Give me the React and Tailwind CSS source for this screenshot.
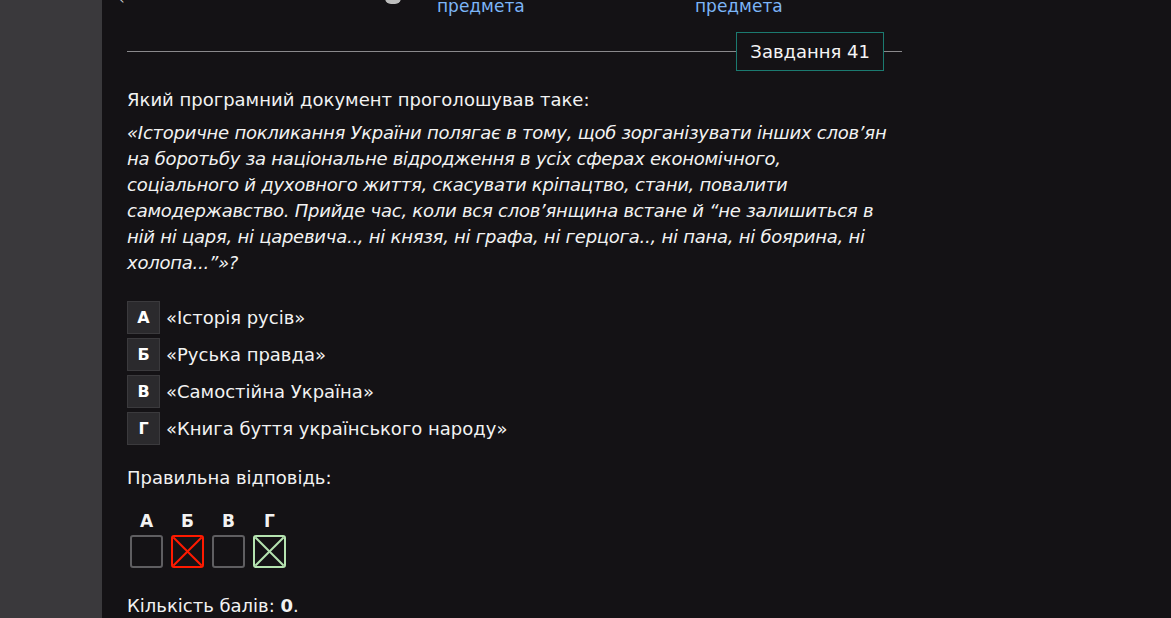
import React from 'react';

const options = [
  { key: 'А', text: '«Історія русів»' },
  { key: 'Б', text: '«Руська правда»' },
  { key: 'В', text: '«Самостійна Україна»' },
  { key: 'Г', text: '«Книга буття українського народу»' },
];

// state of each answer cell: empty / wrong pick / correct
const answers = [
  { key: 'А', state: 'none' },
  { key: 'Б', state: 'wrong' },
  { key: 'В', state: 'none' },
  { key: 'Г', state: 'right' },
];

// quote broken the way the original page wraps it
const quoteLines = [
  '«Історичне покликання України полягає в тому, щоб зорганізувати інших слов’ян',
  'на боротьбу за національне відродження в усіх сферах економічного,',
  'соціального й духовного життя, скасувати кріпацтво, стани, повалити',
  'самодержавство. Прийде час, коли вся слов’янщина встане й “не залишиться в',
  'ній ні царя, ні царевича.., ні князя, ні графа, ні герцога.., ні пана, ні боярина, ні',
  'холопа...”»?',
];

const Cross = ({ color }) => (
  <svg viewBox="0 0 29 29" className="w-full h-full">
    <line x1="0" y1="0" x2="29" y2="29" stroke={color} strokeWidth="2" />
    <line x1="29" y1="0" x2="0" y2="29" stroke={color} strokeWidth="2" />
  </svg>
);

const AnswerCell = ({ state }) => {
  if (state === 'wrong') {
    return (
      <div className="w-[33px] h-[33px] rounded-[3px] border-2 border-[#ff1a00] overflow-hidden">
        <Cross color="#ff1a00" />
      </div>
    );
  }
  if (state === 'right') {
    return (
      <div className="w-[33px] h-[33px] rounded-[3px] border-2 border-[#b5e3b0] overflow-hidden">
        <Cross color="#b5e3b0" />
      </div>
    );
  }
  return <div className="w-[33px] h-[33px] rounded-[3px] border-2 border-[#5f5e61]" />;
};

export default function App() {
  return (
    <div
      className="flex h-[618px] overflow-hidden bg-[#141215] text-[#f2f2f2]"
      style={{ fontFamily: '"DejaVu Sans", "Liberation Sans", sans-serif' }}
    >
      {/* Sidebar */}
      <div className="w-[102px] shrink-0 bg-[#3a393c]" />

      {/* Content */}
      <div className="w-[800px] pl-[25px] text-[18px]">
        {/* Prev / next nav (scrolled mostly out of view) */}
        <div className="flex items-end h-[9px] text-[17px] leading-[22px] overflow-visible">
          <div className="flex items-end w-[258px]">
            <span className="text-[#cfcfcf] text-[14px] leading-none ml-[-8px] mb-[3px]">‹</span>
          </div>
          <div className="flex items-end">
            <span className="w-[16px] h-[6px] rounded-b-full bg-[#bdbdbd] mr-[36px] mb-[5px]" />
            <a className="text-[#7cb5f7] leading-[22px] mb-[-8px] w-[258px]">предмета</a>
            <a className="text-[#7cb5f7] leading-[22px] mb-[-8px]">предмета</a>
          </div>
        </div>

        {/* Task header */}
        <div className="flex items-center mt-[23px] w-[775px]">
          <div className="flex-1 h-px bg-[#8a898c]" />
          <div className="h-[39px] px-[13px] flex items-center border border-[#1b7a70] text-[#f5f5f5] text-[18px]">
            Завдання 41
          </div>
          <div className="w-[18px] h-px bg-[#8a898c]" />
        </div>

        {/* Question */}
        <div className="w-[775px] mt-[16px] leading-[26px]">
          <p>Який програмний документ проголошував таке:</p>
          <p className="italic mt-[7px] tracking-[-0.25px] whitespace-nowrap">
            {quoteLines.map((line, i) => (
              <React.Fragment key={i}>
                {line}
                {i < quoteLines.length - 1 && <br />}
              </React.Fragment>
            ))}
          </p>
        </div>

        {/* Options */}
        <div className="flex flex-col gap-[4px] mt-[25px]">
          {options.map((o) => (
            <div key={o.key} className="flex items-center gap-[6px]">
              <div className="w-[33px] h-[33px] flex items-center justify-center bg-[#2b2a2d] border border-[#3b3a3d] font-bold text-[16px] text-white">
                {o.key}
              </div>
              <span>{o.text}</span>
            </div>
          ))}
        </div>

        {/* Correct answer */}
        <p className="mt-[20px] leading-[26px]">Правильна відповідь:</p>
        <div className="flex gap-[8px] ml-[3px] mt-[20px]">
          {answers.map((a) => (
            <div key={a.key} className="flex flex-col items-center">
              <span className="font-bold text-[17px] leading-[20px] mb-[4px]">{a.key}</span>
              <AnswerCell state={a.state} />
            </div>
          ))}
        </div>

        <p className="mt-[25px] leading-[26px]">
          Кількість балів: <b>0</b>.
        </p>
      </div>
    </div>
  );
}
